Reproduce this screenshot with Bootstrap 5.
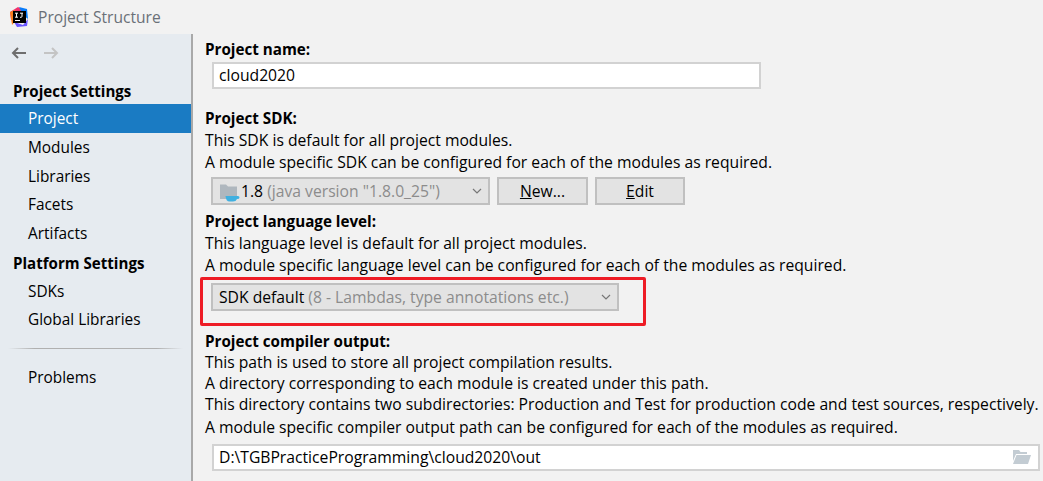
<!DOCTYPE html>
<html lang="en">
<head>
    <meta charset="UTF-8">
    <meta name="viewport" content="width=device-width, initial-scale=1.0">
    <title>Project Structure</title>
    <link href="https://cdn.jsdelivr.net/npm/bootstrap@5.3.0/dist/css/bootstrap.min.css" rel="stylesheet">
    <style>
        html, body { height: 100%; }
        body {
            background: #f2f2f2;
            color: #000;
            font-family: "Open Sans", "Liberation Sans", sans-serif;
            font-size: 15.7px;
            line-height: 21px;
            overflow: hidden;
        }
        .title-bar { height: 34px; padding-left: 9px; gap: 9px; }
        .title-text { color: #6a7078; font-size: 15.6px; }
        .main-area { height: 447px; }
        .side-panel {
            width: 193px;
            background: #e6ebf0;
            border-right: 2px solid #a9a9a9;
            font-size: 15.4px;
        }
        .nav-arrows { height: 36px; padding: 1px 0 0 10px; gap: 16px; }
        .side-head { font-weight: 700; font-size: 15.1px; height: 29px; padding: 6px 0 0 13px; }
        .side-head-first { height: 34px; padding-top: 11px; }
        .side-item { height: 28.7px; padding: 4.25px 0 0 28px; }
        .side-item.is-active { background: #1a7bc3; color: #fff; }
        .side-sep {
            height: 1px;
            margin: 14px 8px 14px 8px;
            background: linear-gradient(90deg, #e6ebf0, #b0b0b0 15%, #b0b0b0 85%, #e6ebf0);
        }
        .form-pane { padding: 5px 0 0 12px; min-width: 0; }
        .field-label { font-weight: 700; font-size: 15.2px; }
        .text-field {
            height: 27px;
            background: #fff;
            border: 2px solid #d2d2d2;
            margin-left: 7px;
            padding: 1px 5px;
        }
        .name-field { width: 549px; margin-top: 2px; margin-bottom: 19px; }
        .out-field { width: 828px; margin-top: 6px; padding-right: 7px; }
        .combo {
            height: 28px;
            background: #e3e3e3;
            border: 2px solid #c0c0c0;
            margin-left: 6px;
            padding: 1px 6px;
        }
        .combo-sdk { width: 279px; }
        .combo-lang { width: 408px; }
        .muted-text { color: #8c8c8c; }
        .push-btn {
            height: 28px;
            background: #e3e3e3;
            border: 2px solid #c0c0c0;
            border-radius: 0;
            padding: 0;
            color: #000;
            font-size: 15.7px;
            line-height: 21px;
        }
        .btn-new { width: 91px; margin-left: 7px; }
        .btn-edit { width: 90px; margin-left: 7px; }
        .sdk-row { margin-top: 4px; margin-bottom: 6px; }
        .lang-row { margin-top: 7px; margin-bottom: 20px; position: relative; width: 414px; }
        .help-block > div:not(.field-label) { line-height: 22px; }
        .comp-line { margin-top: 2px; }
        .red-box {
            position: absolute;
            left: -5px;
            top: -6px;
            width: 446px;
            height: 49px;
            border: 3px solid #ee1c25;
            border-radius: 2px;
        }
    </style>
</head>
<body>
    <!-- Title bar -->
    <div class="title-bar d-flex align-items-center">
        <svg width="20" height="20" viewBox="0 0 20 20">
            <path d="M1 5 L9 0 L14 3 L6 12 L2 13Z" fill="#f0336c"/>
            <path d="M1 5 L6 3 L8 12 L3 18Z" fill="#fc801d"/>
            <path d="M10 0 L18 2 L19 12 L14 8Z" fill="#087cfa"/>
            <path d="M5 15 L14 18 L19 12 L18 19 L8 20Z" fill="#6b57ff"/>
            <rect x="4" y="4" width="13" height="12" fill="#000"/>
            <path d="M6 6.2h3M7.500 6.2v4M6 10.2h3M11 6.2h3M13 6.2v3.2q0 .9-1 .9h-1" fill="none" stroke="#fff" stroke-width="1"/>
            <rect x="6" y="13" width="5" height="1" fill="#fff"/>
        </svg>
        <span class="title-text">Project Structure</span>
    </div>

    <div class="main-area d-flex">
        <!-- Left panel -->
        <div class="side-panel flex-shrink-0">
            <div class="nav-arrows d-flex align-items-center">
                <svg width="17" height="14" viewBox="0 0 17 14">
                    <path d="M16 7H3M8 2 3 7l5 5" fill="none" stroke="#6e6e6e" stroke-width="2"/>
                </svg>
                <svg width="17" height="14" viewBox="0 0 17 14">
                    <path d="M1 7h13M9 2l5 5-5 5" fill="none" stroke="#c4c4c4" stroke-width="2"/>
                </svg>
            </div>
            <div class="side-head side-head-first">Project Settings</div>
            <div class="side-item is-active">Project</div>
            <div class="side-item">Modules</div>
            <div class="side-item">Libraries</div>
            <div class="side-item">Facets</div>
            <div class="side-item">Artifacts</div>
            <div class="side-head">Platform Settings</div>
            <div class="side-item">SDKs</div>
            <div class="side-item">Global Libraries</div>
            <div class="side-sep"></div>
            <div class="side-item">Problems</div>
        </div>

        <!-- Right panel -->
        <div class="form-pane flex-grow-1">
            <div class="field-label">Project name:</div>
            <div class="text-field name-field">cloud2020</div>

            <div class="help-block">
                <div class="field-label">Project SDK:</div>
                <div>This SDK is default for all project modules.</div>
                <div>A module specific SDK can be configured for each of the modules as required.</div>
            </div>
            <div class="sdk-row d-flex">
                <div class="combo combo-sdk d-flex align-items-center">
                    <svg class="flex-shrink-0" width="22" height="24" viewBox="0 0 22 24">
                        <path d="M1 5.500h6l2 2h9V20H1z" fill="#afb7be"/>
                        <path d="M6.500 17h12.500q1.500 0 1.500 1.500t-2.500 1.500q-1 2.500-4 2.500h-3.500q-3.500 0-4-5.500z" fill="#40b0e0"/>
                    </svg>
                    <span class="text-nowrap">1.8 <span class="muted-text">(java version "1.8.0_25")</span></span>
                    <svg class="ms-auto" width="10" height="6" viewBox="0 0 10 6">
                        <path d="M1 1l4 4 4-4" fill="none" stroke="#777" stroke-width="1.2"/>
                    </svg>
                </div>
                <button type="button" class="btn push-btn btn-new"><u>N</u>ew...</button>
                <button type="button" class="btn push-btn btn-edit"><u>E</u>dit</button>
            </div>

            <div class="help-block">
                <div class="field-label">Project language level:</div>
                <div>This language level is default for all project modules.</div>
                <div>A module specific language level can be configured for each of the modules as required.</div>
            </div>
            <div class="lang-row">
                <div class="combo combo-lang d-flex align-items-center">
                    <span class="text-nowrap">SDK default <span class="muted-text">(8 - Lambdas, type annotations etc.)</span></span>
                    <svg class="ms-auto" width="10" height="6" viewBox="0 0 10 6">
                        <path d="M1 1l4 4 4-4" fill="none" stroke="#777" stroke-width="1.2"/>
                    </svg>
                </div>
                <div class="red-box"></div>
            </div>

            <div class="field-label">Project compiler output:</div>
            <div>This path is used to store all project compilation results.</div>
            <div>A directory corresponding to each module is created under this path.</div>
            <div class="text-nowrap">This directory contains two subdirectories: Production and Test for production code and test sources, respectively.</div>
            <div class="comp-line">A module specific compiler output path can be configured for each of the modules as required.</div>
            <div class="text-field out-field d-flex align-items-center justify-content-between">
                <span>D:\TGBPracticeProgramming\cloud2020\out</span>
                <svg width="19" height="15" viewBox="0 0 19 15">
                    <path d="M1 0h6l1.500 2H15v2H4L1 11z" fill="#c3ccd3"/>
                    <path d="M4.500 5H19l-3 9H1z" fill="#c3ccd3"/>
                </svg>
            </div>
        </div>
    </div>

    <script src="https://cdn.jsdelivr.net/npm/bootstrap@5.3.0/dist/js/bootstrap.bundle.min.js"></script>
</body>
</html>
